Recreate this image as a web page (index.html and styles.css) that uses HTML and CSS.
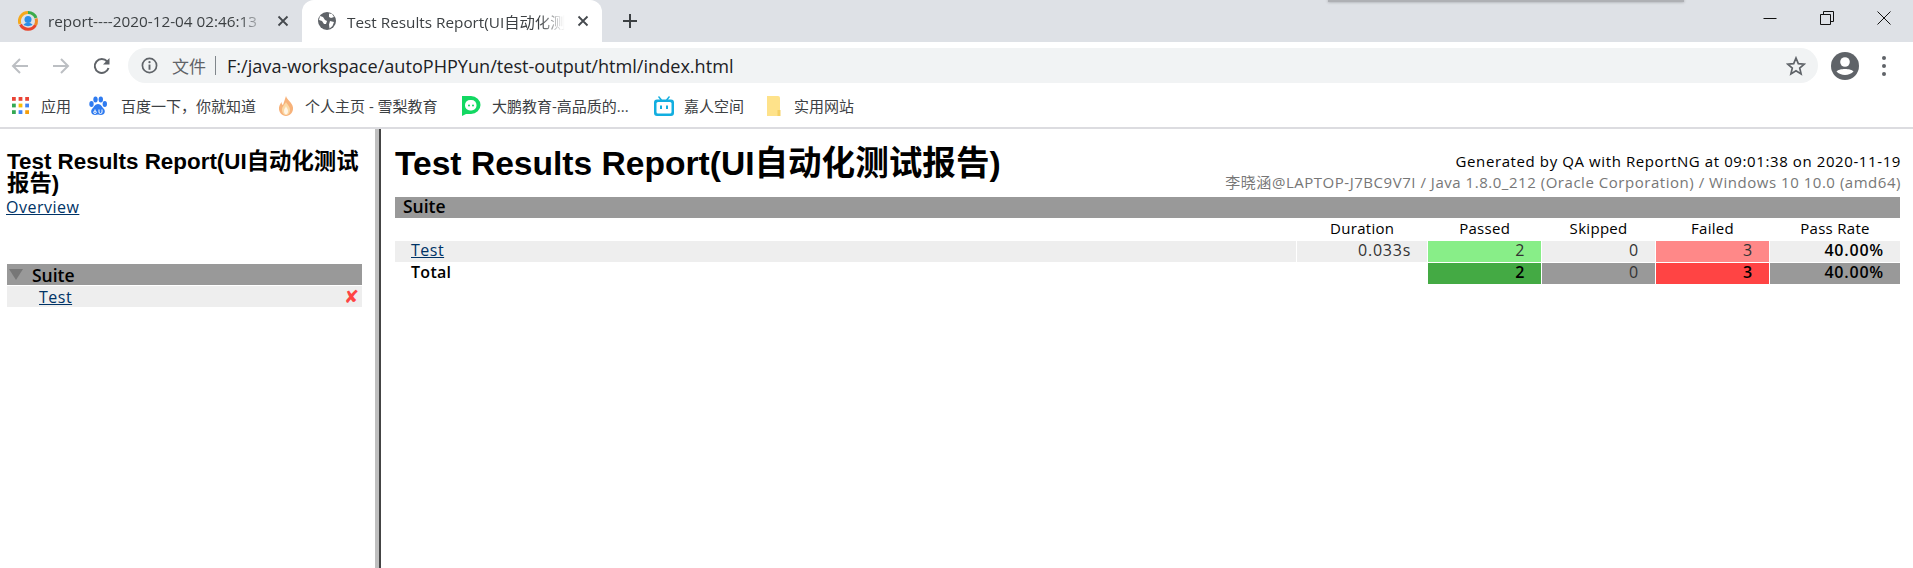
FILE: index.html
```html
<!DOCTYPE html>
<html lang="zh">
<head>
<meta charset="utf-8">
<title>Test Results Report</title>
<link rel="stylesheet" href="styles.css">
</head>
<body>
<div class="browser">
  <div class="tabstrip">
    <div class="tab">
      <svg class="favicon" viewBox="0 0 20 20"><path d="M10 1.500A8.500 8.500 0 0 0 2 13" fill="none" stroke="#f5a81c" stroke-width="3"/><path d="M10 1.500A8.500 8.500 0 0 1 18 7" fill="none" stroke="#3cab4a" stroke-width="3"/><path d="M2.500 13.500A8.500 8.500 0 0 0 17.500 14" fill="none" stroke="#e8452c" stroke-width="3"/><path d="M18 7.500A8.500 8.500 0 0 1 17.500 14" fill="none" stroke="#f08a24" stroke-width="3"/><circle cx="10" cy="8.500" r="3.500" fill="#2a8ee8"/><path d="M5.500 14c1.500-3 7.500-3 9 0-3 1.500-6 1.500-9 0z" fill="#2a8ee8"/></svg>
      <span class="tab-label">report----2020-12-04 02:46:13</span>
      <svg class="tab-close" viewBox="0 0 12 12"><path d="M1.500 1.500l9 9M10.500 1.500l-9 9" stroke="#45494e" stroke-width="1.800"/></svg>
    </div>
    <div class="tab active">
      <svg class="favicon" viewBox="0 0 20 20"><circle cx="10" cy="10" r="9" fill="#5f6368"/><path d="M3 5l3 1 2 3 2 1-1 3-2 0-2-3-3-1zM12 2.500l3 .5 2 3-3 1-2-1zM13 10l4 1-1.500 4-3 2.500-.5-4z" fill="#fff"/></svg>
      <span class="tab-label">Test Results Report(UI自动化测试报告)</span>
      <svg class="tab-close" viewBox="0 0 12 12"><path d="M1.500 1.500l9 9M10.500 1.500l-9 9" stroke="#45494e" stroke-width="1.800"/></svg>
    </div>
    <svg class="new-tab" viewBox="0 0 16 16"><path d="M8 1v14M1 8h14" stroke="#3c4043" stroke-width="2"/></svg>
    <div class="window-buttons">
      <svg class="win-btn" viewBox="0 0 16 16"><path d="M1.500 8.500h13" stroke="#111" stroke-width="1"/></svg>
      <svg class="win-btn" viewBox="0 0 16 16"><path d="M1.500 4.500h10v10h-10zM4.500 4.500v-3h10v10h-3" fill="none" stroke="#111" stroke-width="1"/></svg>
      <svg class="win-btn" viewBox="0 0 16 16"><path d="M1.500 1.500l13 13M14.500 1.500l-13 13" stroke="#111" stroke-width="1"/></svg>
    </div>
    <div class="overlap-shadow"></div>
  </div>
  <div class="toolbar">
    <svg class="nav-icon" viewBox="0 0 20 20"><path d="M18 10H3M10 3l-7 7 7 7" fill="none" stroke="#bcbfc3" stroke-width="2"/></svg>
    <svg class="nav-icon" viewBox="0 0 20 20"><path d="M2 10h15M10 3l7 7-7 7" fill="none" stroke="#bcbfc3" stroke-width="2"/></svg>
    <svg class="nav-icon" viewBox="0 0 20 20"><path d="M16.500 12a7 7 0 1 1-1.300-6.500" fill="none" stroke="#5f6368" stroke-width="2"/><path d="M17.500 2v6.500H11z" fill="#5f6368"/></svg>
    <div class="omnibox">
      <svg class="info-icon" viewBox="0 0 18 18"><circle cx="9" cy="9" r="7.500" fill="none" stroke="#5f6368" stroke-width="1.800"/><path d="M9 8v5.500" stroke="#5f6368" stroke-width="2"/><circle cx="9" cy="5.500" r="1.200" fill="#5f6368"/></svg>
      <span class="scheme">文件</span>
      <span class="divider-bar"></span>
      <span class="url">F:/java-workspace/autoPHPYun/test-output/html/index.html</span>
      <svg class="star" viewBox="0 0 20 20"><path d="M10 2l2.300 5.600 6 .5-4.600 3.900 1.400 5.900L10 14.800 4.900 17.900l1.400-5.900L1.700 8.100l6-.5z" fill="none" stroke="#5f6368" stroke-width="1.700"/></svg>
    </div>
    <svg class="avatar" viewBox="0 0 28 28"><circle cx="14" cy="14" r="14" fill="#5f6368"/><circle cx="14" cy="10" r="4.800" fill="#fff"/><path d="M5.500 19.500c2-3.500 15-3.500 17 0-4 4.500-13 4.500-17 0z" fill="#fff"/></svg>
    <svg class="menu-dots" viewBox="0 0 6 22"><circle cx="3" cy="3" r="2" fill="#5f6368"/><circle cx="3" cy="11" r="2" fill="#5f6368"/><circle cx="3" cy="19" r="2" fill="#5f6368"/></svg>
  </div>
  <div class="bookmarks">
    <div class="bookmark b-apps">
      <svg class="bm-icon apps" viewBox="0 0 18 18"><g fill="#ea4335"><rect x="0" y="0" width="4" height="4"/><rect x="7" y="0" width="4" height="4"/><rect x="14" y="0" width="4" height="4"/></g><g fill="#34a853"><rect x="0" y="7" width="4" height="4"/><rect x="0" y="14" width="4" height="4"/></g><rect x="7" y="7" width="4" height="4" fill="#fbbc05"/><rect x="14" y="7" width="4" height="4" fill="#4285f4"/><rect x="7" y="14" width="4" height="4" fill="#4285f4"/><rect x="14" y="14" width="4" height="4" fill="#f59e0b"/></svg>
      <span>应用</span>
    </div>
    <div class="bookmark b-baidu">
      <svg class="bm-icon" viewBox="0 0 20 20"><g fill="#2f7bf0"><ellipse cx="3.500" cy="8" rx="2.200" ry="3"/><ellipse cx="7.500" cy="3.500" rx="2.200" ry="3"/><ellipse cx="12.800" cy="3.500" rx="2.200" ry="3"/><ellipse cx="16.800" cy="8" rx="2.200" ry="3"/><path d="M10 8c3 0 4 3 6 5 2 3 0 6-3 6-1 0-2-.5-3-.5s-2 .5-3 .5c-3 0-5-3-3-6 2-2 3-5 6-5z"/></g><path d="M7 13.500v3M7 15a1.300 1.300 0 1 0 .01 0M11 13.500v2.500a1.500 1.500 0 0 0 3 0v-2.500" fill="none" stroke="#fff" stroke-width="1"/></svg>
      <span>百度一下，你就知道</span>
    </div>
    <div class="bookmark b-flame">
      <svg class="bm-icon" viewBox="0 0 20 20"><path d="M10 0c1 4 6 6 7 11.500C17.500 16 14 20 10 20s-7.500-4-7-8.500C3.500 9 4.500 8 5.500 6c0 2 1 3 1.500 3C8 6 9 3 10 0z" fill="#f7b27a"/><path d="M10 6c.5 2 4 4 4 8 0 3-2 5-4 5s-4-2-4-5c0-4 3.500-6 4-8z" fill="#fbd9a6"/><path d="M10 10c.3 1.500 2 3 2 5 0 2-1 3.500-2 3.500S8 17 8 15c0-2 1.700-3.500 2-5z" fill="#fff6e8"/></svg>
      <span>个人主页 - 雪梨教育</span>
    </div>
    <div class="bookmark b-dapeng">
      <svg class="bm-icon" viewBox="0 0 20 20"><path d="M1 0h9a9.500 9 0 0 1 0 18H5l-4 2z" fill="#12d862"/><rect x="4" y="4" width="11.500" height="10.500" rx="5" fill="#fff"/><circle cx="8" cy="9.500" r="1" fill="#12d862"/><circle cx="12" cy="9.500" r="1" fill="#12d862"/></svg>
      <span>大鹏教育-高品质的...</span>
    </div>
    <div class="bookmark b-bili">
      <svg class="bm-icon" viewBox="0 0 20 20"><path d="M5 0l3 3.500h4L15 0l1 1-2 2.500h3a3 3 0 0 1 3 3V17a3 3 0 0 1-3 3H3a3 3 0 0 1-3-3V6.500a3 3 0 0 1 3-3h3L4 1z" fill="#12aee0"/><rect x="2.500" y="6" width="15" height="11.500" rx="1.500" fill="#fff"/><rect x="6" y="9.500" width="2" height="3.500" fill="#12aee0"/><rect x="12" y="9.500" width="2" height="3.500" fill="#12aee0"/></svg>
      <span>嘉人空间</span>
    </div>
    <div class="bookmark b-folder">
      <svg class="bm-icon folder" viewBox="0 0 15 20"><path d="M1 0h11a2 2 0 0 1 2 2v18H1z" fill="#fee28a"/><path d="M11.500 14h3v6h-3z" fill="#f5d166"/></svg>
      <span>实用网站</span>
    </div>
  </div>
</div>
<div class="frames">
  <aside class="menu">
    <h1 class="menu-title">Test Results Report(UI自动化测试报告)</h1>
    <a class="link overview" href="#">Overview</a>
    <div class="suite-head"><span class="triangle"></span><span>Suite</span></div>
    <div class="suite-test"><a class="link" href="#">Test</a><span class="cross">✘</span></div>
  </aside>
  <div class="frame-split"></div>
  <main class="content">
    <header class="report-head">
      <h1 class="report-title">Test Results Report(UI自动化测试报告)</h1>
      <div class="meta">
        <div>Generated by QA with ReportNG at 09:01:38 on 2020-11-19</div>
        <div class="sys">李晓涵@LAPTOP-J7BC9V7I / Java 1.8.0_212 (Oracle Corporation) / Windows 10 10.0 (amd64)</div>
      </div>
    </header>
    <table class="results">
      <colgroup>
        <col class="c-name"><col class="c-dur"><col class="c-num"><col class="c-num"><col class="c-num"><col class="c-rate">
      </colgroup>
      <thead>
        <tr><th class="suite" colspan="6">Suite</th></tr>
        <tr class="cols"><th></th><th>Duration</th><th>Passed</th><th>Skipped</th><th>Failed</th><th>Pass Rate</th></tr>
      </thead>
      <tbody>
        <tr class="row">
          <td class="name"><a class="link" href="#">Test</a></td>
          <td class="num">0.033s</td>
          <td class="num pass">2</td>
          <td class="num">0</td>
          <td class="num fail">3</td>
          <td class="num rate">40.00%</td>
        </tr>
        <tr class="total">
          <td class="name">Total</td>
          <td class="blank"></td>
          <td class="num t-pass">2</td>
          <td class="num t-skip">0</td>
          <td class="num t-fail">3</td>
          <td class="num t-rate">40.00%</td>
        </tr>
      </tbody>
    </table>
  </main>
</div>
</body>
</html>
```
FILE: styles.css
```css
* { box-sizing: border-box; }
html, body { margin: 0; padding: 0; height: 568px; overflow: hidden; background: #fff; }
body { font-family: "Open Sans", "Noto Sans CJK SC", sans-serif; color: #000; }

.browser { height: 129px; border-bottom: 2px solid #dcdce0; }

/* tab strip */
.tabstrip { position: relative; display: flex; align-items: center; height: 42px; background: #dee1e6; }
.tab { display: flex; align-items: center; width: 300px; height: 42px; padding: 0 12px 0 16px; color: #3c4043; font-size: 15.300px; }
.tab:first-child { width: 302px; padding-left: 18px; }
.tab.active { background: #fff; border-radius: 12px 12px 0 0; padding-left: 15px; }
.favicon { flex: none; width: 20px; height: 20px; }
.tab-label { flex: 1; min-width: 0; margin-left: 10px; overflow: hidden; white-space: nowrap; -webkit-mask-image: linear-gradient(to right, #000 88%, transparent 100%); mask-image: linear-gradient(to right, #000 88%, transparent 100%); }
.tab-close { flex: none; width: 12px; height: 12px; margin: 0 1px 0 12px; }
.new-tab { flex: none; width: 16px; height: 16px; margin-left: 20px; }
.window-buttons { display: flex; gap: 41px; margin-left: auto; margin-right: 21px; }
.win-btn { width: 16px; height: 16px; margin-top: -6px; }
.overlap-shadow { position: absolute; left: 1328px; top: 0; width: 356px; height: 2px; background: #aeb0b4; box-shadow: 0 0 3px #8e9094; }

/* toolbar */
.toolbar { display: flex; align-items: center; height: 42px; padding: 5px 0 0 10px; background: #fff; }
.nav-icon { flex: none; width: 20px; height: 20px; margin-right: 21px; }
.omnibox { flex: none; display: flex; align-items: center; width: 1690px; height: 35px; margin-left: -5px; padding: 0 12px 0 13px; border-radius: 18px; background: #f1f3f4; }
.info-icon { flex: none; width: 17px; height: 17px; }
.scheme { margin-left: 14px; font-size: 17px; color: #5f6368; }
.divider-bar { width: 1px; height: 19px; margin: 0 11px 0 9px; background: #80868b; }
.url { flex: 1; font-size: 18.100px; color: #202124; white-space: nowrap; }
.star { flex: none; width: 20px; height: 20px; }
.avatar { flex: none; width: 28px; height: 28px; margin-left: 13px; }
.menu-dots { flex: none; width: 6px; height: 22px; margin-left: 22px; }

/* bookmarks */
.bookmarks { display: flex; align-items: center; height: 43px; padding-left: 12px; background: #fff; }
.bookmark { display: flex; align-items: center; font-size: 15px; color: #3c4043; white-space: nowrap; }
.bm-icon { flex: none; width: 20px; height: 20px; }
.bm-icon.apps { width: 17px; height: 17px; }
.bm-icon.folder { width: 15px; }
.b-apps { gap: 12px; width: 76px; }
.b-baidu { gap: 13px; width: 188px; }
.b-flame { gap: 9px; width: 185px; }
.b-dapeng { gap: 11px; width: 193px; }
.b-bili { gap: 10px; width: 112px; }
.b-folder { gap: 13px; }

/* frames */
.frames { display: flex; height: 439px; }
.menu { flex: none; width: 375px; padding: 22px 13px 0 7px; }
.menu-title { margin: 0; font: bold 22.400px/22px "Liberation Sans", "Noto Sans CJK SC", sans-serif; }
.overview { display: block; width: max-content; font-size: 16px; line-height: 24px; margin-left: -1px; }
.link { color: #036; text-decoration: underline; letter-spacing: .5px; }
.suite-head { display: flex; align-items: center; height: 21px; margin-top: 45px; background: #999; font-weight: 600; font-size: 17.500px; }
.triangle { width: 0; height: 0; margin: 0 9px 0 2px; border-style: solid; border-width: 11px 7px 0; border-color: #777 transparent transparent; }
.suite-test { display: flex; align-items: center; justify-content: space-between; height: 21px; margin-top: 1px; padding: 0 3px 0 32px; background: #eee; font-size: 16px; line-height: 20px; }
.cross { color: #f44; font: 18px/20px "DejaVu Sans", sans-serif; }

.frame-split { flex: none; width: 6px; background: linear-gradient(to right, #bfbfbf 0 4px, #444 4px 6px); }

.content { flex: 1; padding: 16px 12px 0 14px; }
.report-head { display: flex; justify-content: space-between; align-items: flex-end; height: 51px; }
.report-title { margin: 0; font: bold 33.600px/38px "Liberation Sans", "Noto Sans CJK SC", sans-serif; white-space: nowrap; align-self: flex-start; }
.meta { text-align: right; font-size: 15px; line-height: 21px; letter-spacing: .6px; padding-bottom: 3px; }
.sys { color: #777; letter-spacing: .53px; }

.results { table-layout: fixed; border-collapse: separate; border-spacing: 1px; margin: 0 0 0 -1px; font-size: 16px; line-height: 19px; letter-spacing: .8px; }
.c-name { width: 902px; }
.c-dur { width: 130px; }
.c-num { width: 113px; }
.c-rate { width: 130px; }
.results th, .results td { height: 21px; padding: 0 0 2px; font-weight: 400; white-space: nowrap; }
.results th.suite { background: #999; text-align: left; padding-left: 8px; font-weight: 600; font-size: 17.500px; letter-spacing: 0; }
.cols th { text-align: center; font-size: 15px; line-height: 18px; letter-spacing: .3px; }
.results .cols th { padding-bottom: 3px; }
.row td { background: #eee; }
.results td.name { padding-left: 16px; letter-spacing: .3px; }
.results td.num { text-align: right; padding-right: 16px; }
.row .num { color: #333; }
.results td.pass { background: #88ee88; }
.results td.fail { background: #ff8888; }
.results td.rate, .total td { font-weight: 600; color: #000; }
.results td.t-pass { background: #44aa44; }
.results td.t-skip { background: #999; color: #333; font-weight: 400; }
.results td.t-fail { background: #ff4444; }
.results td.t-rate { background: #999; }
```
